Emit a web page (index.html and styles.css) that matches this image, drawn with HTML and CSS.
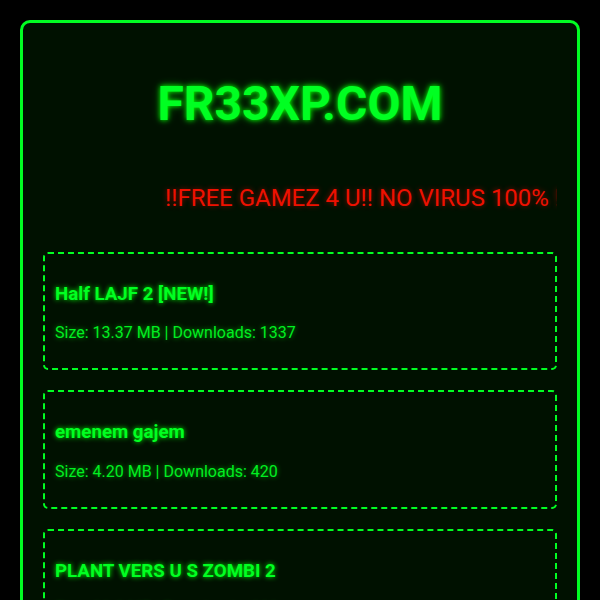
FILE: index.html
```html
<!DOCTYPE html>
<html>
<head>
<meta charset="utf-8">
<link rel="stylesheet" href="styles.css">
</head>
<body>
<div class="container">
  <h1 class="title">FR33XP.COM</h1>
  <div class="marquee"><span class="marquee-text">!!FREE GAMEZ 4 U!! NO VIRUS 100% !!FREE GAMEZ 4 U!!</span></div>
  <div class="card">
    <h3 class="game-title">Half LAJF 2 [NEW!]</h3>
    <p class="game-meta">Size: 13.37 MB | Downloads: 1337</p>
  </div>
  <div class="card">
    <h3 class="game-title">emenem gajem</h3>
    <p class="game-meta">Size: 4.20 MB | Downloads: 420</p>
  </div>
  <div class="card">
    <h3 class="game-title">PLANT VERS U S ZOMBI 2</h3>
    <p class="game-meta">Size: 66.6 MB | Downloads: 666</p>
  </div>
</div>
</body>
</html>
```
FILE: styles.css
```css
html, body {
  margin: 0;
  padding: 0;
  background: #000;
}
body {
  padding: 20px;
  font-family: Roboto, "Liberation Sans", sans-serif;
  color: #00ff00;
}
.container {
  border: 3px solid #00ff22;
  border-radius: 10px;
  background: #001100;
  padding: 20px;
}
.title {
  font-size: 48px;
  font-weight: 700;
  text-align: center;
  margin: 32px 0 52px;
  color: #00ff22;
  text-shadow: 0 0 5px #00ff00, 0 0 10px rgba(0,255,0,0.4);
}
.marquee {
  overflow: hidden;
  white-space: nowrap;
  margin: 0 0 40px;
  font-size: 24px;
  color: #ee1100;
  text-shadow: 0 0 5px rgba(255,0,0,0.5);
}
.marquee-text {
  display: inline-block;
  padding-left: 122px;
}
.card {
  border: 2px dashed #00ff22;
  border-radius: 5px;
  padding: 10px;
  margin-bottom: 20px;
}
.game-title {
  font-size: 18.72px;
  font-weight: 700;
  margin: 18.72px 0;
  color: #00ff22;
  text-shadow: 0 0 5px #00ff00;
}
.game-meta {
  font-size: 16px;
  margin: 16px 0;
  color: #00ee22;
  text-shadow: 0 0 5px rgba(0,255,0,0.6);
}
```
